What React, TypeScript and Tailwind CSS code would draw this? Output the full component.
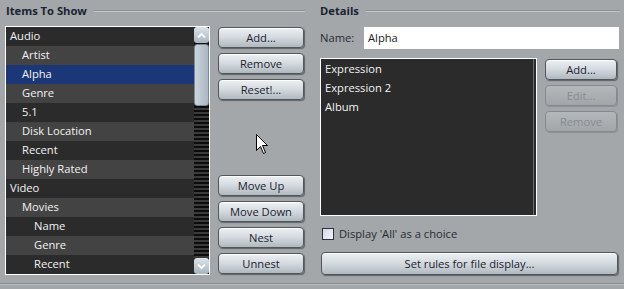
import clsx from "clsx";

const items = [
  { label: "Audio", level: 0 },
  { label: "Artist", level: 1 },
  { label: "Alpha", level: 1, selected: true },
  { label: "Genre", level: 1 },
  { label: "5.1", level: 1 },
  { label: "Disk Location", level: 1 },
  { label: "Recent", level: 1 },
  { label: "Highly Rated", level: 1 },
  { label: "Video", level: 0 },
  { label: "Movies", level: 1 },
  { label: "Name", level: 2 },
  { label: "Genre", level: 2 },
  { label: "Recent", level: 2 },
];

function Heading({ title }: { title: string }) {
  return (
    <div className="flex h-[18px] items-center gap-[7px]">
      <span className="font-bold text-[#1a2331] leading-none">{title}</span>
      <div className="flex-1 border-t border-b border-t-[#8c9093] border-b-[#c3c6c8]" />
    </div>
  );
}

function Btn({
  label,
  disabled,
  className,
}: {
  label: string;
  disabled?: boolean;
  className?: string;
}) {
  return (
    <button
      className={clsx(
        "flex h-[21px] shrink-0 items-center justify-center rounded-[4px] border leading-none",
        disabled
          ? "border-[#858a8e] bg-linear-to-b from-[#b4b8bb] to-[#a2a6a9] text-[#868c91] shadow-[1px_1px_0_#8d9194]"
          : "border-[#52575c] bg-linear-to-b from-[#eef1f4] via-[#d3d9de] to-[#b1b9c0] text-[#1b2230] shadow-[1px_1px_1px_#5f6367,inset_0_1px_0_#ffffff]",
        className
      )}
    >
      {label}
    </button>
  );
}

function Chevron({ up }: { up?: boolean }) {
  return (
    <svg width="9" height="7" viewBox="0 0 9 7">
      <path
        d={up ? "M1 5.5 L4.5 2 L8 5.5" : "M1 1.5 L4.5 5 L8 1.5"}
        fill="none"
        stroke="#ffffff"
        strokeWidth="1.8"
      />
    </svg>
  );
}

function Scrollbar() {
  return (
    <div className="flex w-[15px] flex-col bg-[#141414]">
      <div className="flex h-[16px] items-center justify-center rounded-[3px] bg-linear-to-b from-[#dde4ea] to-[#a9b5bf]">
        <Chevron up />
      </div>
      <div className="mt-[1px] h-[62px] rounded-[3px] border border-[#7d8891] bg-linear-to-r from-[#cad4dc] to-[#abb7c1]" />
      <div className="flex-1 bg-[repeating-linear-gradient(to_bottom,#0c0c0c_0px,#0c0c0c_2px,#3b3b3b_2px,#3b3b3b_4px)]" />
      <div className="flex h-[16px] items-center justify-center rounded-[3px] bg-linear-to-b from-[#dde4ea] to-[#a9b5bf]">
        <Chevron />
      </div>
    </div>
  );
}

export default function App() {
  return (
    <div className="relative h-[289px] w-[624px] overflow-hidden bg-[#a3a7aa] font-['Open_Sans',sans-serif] text-[11.2px]">
      <div className="flex h-[283px]">
        {/* Items To Show */}
        <section className="flex w-[310px] flex-col pl-[5px] pr-[5px] pt-[2px]">
          <div className="pl-[1px]">
            <Heading title="Items To Show" />
          </div>
          <div className="mt-[6px] flex">
            <div className="flex h-[249px] w-[205px] border border-white">
              <div className="flex-1 bg-[#2b2b2b]">
                {items.map((it, i) => (
                  <div
                    key={i}
                    className={clsx(
                      "flex h-[19px] items-center text-[#f2f2f2]",
                      it.selected
                        ? "bg-[#1b3777]"
                        : i % 2 === 1
                        ? "bg-[#434343]"
                        : "bg-[#2b2b2b]",
                      it.level === 0 && "pl-[4px]",
                      it.level === 1 && "pl-[16px]",
                      it.level === 2 && "pl-[28px]"
                    )}
                  >
                    {it.label}
                  </div>
                ))}
              </div>
              <Scrollbar />
            </div>
            <div className="ml-[8px] mt-[1px] flex h-[247px] w-[86px] flex-col justify-between">
              <div className="flex flex-col gap-[5px]">
                <Btn label="Add..." />
                <Btn label="Remove" />
                <Btn label="Reset!..." />
              </div>
              <div className="flex flex-col gap-[5px]">
                <Btn label="Move Up" />
                <Btn label="Move Down" />
                <Btn label="Nest" />
                <Btn label="Unnest" />
              </div>
            </div>
          </div>
        </section>

        {/* Details */}
        <section className="flex flex-1 flex-col pl-[10px] pr-[4px] pt-[2px]">
          <Heading title="Details" />
          <div className="mt-[7px] flex h-[22px] items-center">
            <span className="w-[44px] text-[#262c33]">Name:</span>
            <div className="flex h-[22px] w-[255px] items-center bg-white pl-[4px] text-[#1a1a1a]">
              Alpha
            </div>
          </div>
          <div className="mt-[9px] flex">
            <div className="relative h-[158px] w-[217px] border border-white bg-[#2b2b2b] pt-[1px] text-[#f2f2f2]">
              {["Expression", "Expression 2", "Album"].map((t) => (
                <div key={t} className="flex h-[19px] items-center pl-[4px]">
                  {t}
                </div>
              ))}
              <div className="absolute right-[2px] top-0 h-full w-px bg-[#6a6a6a]" />
            </div>
            <div className="ml-[8px] mt-[1px] flex w-[72px] flex-col gap-[5px]">
              <Btn label="Add..." />
              <Btn label="Edit..." disabled />
              <Btn label="Remove" disabled />
            </div>
          </div>
          <div className="mt-[9px] flex h-[18px] items-center pl-[2px]">
            <div className="h-[12px] w-[12px] border border-[#2b3140] bg-linear-to-br from-[#d5d9e3] to-[#f2f4f8]" />
            <span className="ml-[5px] text-[#262c33]">Display 'All' as a choice</span>
          </div>
          <Btn label="Set rules for file display..." className="ml-[1px] mt-[9px] h-[23px] w-[297px]" />
        </section>
      </div>
      <div className="h-px bg-[#878b8e]" />
      <div className="h-px bg-[#b9bdbf]" />

      {/* mouse pointer */}
      <svg className="absolute left-[256px] top-[134px]" width="13" height="21" viewBox="0 0 13 21">
        <path
          d="M0.5 0.5 L0.5 16.5 L4.5 12.5 L7.5 19.5 L9.5 18.5 L6.5 11.5 L11.5 11.5 Z"
          fill="#ffffff"
          stroke="#000000"
          strokeWidth="1"
        />
      </svg>
    </div>
  );
}
